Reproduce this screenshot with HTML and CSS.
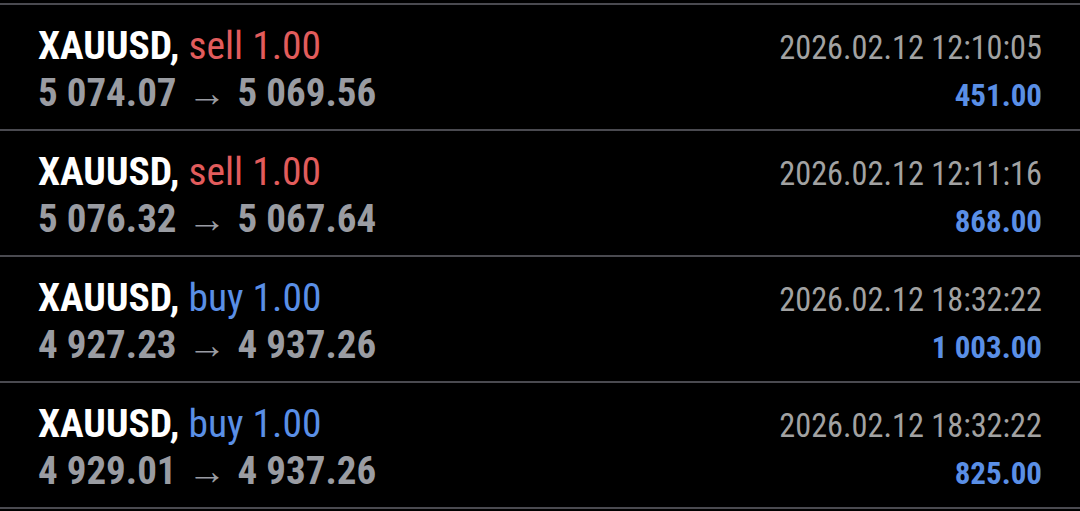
FILE: index.html
```html
<!DOCTYPE html>
<html lang="en">
<head>
  <meta charset="UTF-8" />
  <title>History</title>
  <link rel="stylesheet" href="styles.css">
</head>
<body>
<div class="deals">
  <div class="deal">
    <div class="title"><b>XAUUSD,</b> <span class="sell">sell 1.00</span></div>
    <div class="time">2026.02.12 12:10:05</div>
    <div class="prices">5 074.07 <span class="arrow">→</span> 5 069.56</div>
    <div class="profit">451.00</div>
  </div>
  <div class="deal">
    <div class="title"><b>XAUUSD,</b> <span class="sell">sell 1.00</span></div>
    <div class="time">2026.02.12 12:11:16</div>
    <div class="prices">5 076.32 <span class="arrow">→</span> 5 067.64</div>
    <div class="profit">868.00</div>
  </div>
  <div class="deal">
    <div class="title"><b>XAUUSD,</b> <span class="buy">buy 1.00</span></div>
    <div class="time">2026.02.12 18:32:22</div>
    <div class="prices">4 927.23 <span class="arrow">→</span> 4 937.26</div>
    <div class="profit">1 003.00</div>
  </div>
  <div class="deal">
    <div class="title"><b>XAUUSD,</b> <span class="buy">buy 1.00</span></div>
    <div class="time">2026.02.12 18:32:22</div>
    <div class="prices">4 929.01 <span class="arrow">→</span> 4 937.26</div>
    <div class="profit">825.00</div>
  </div>
</div>
</body>
</html>
```

FILE: styles.css
```css
body { margin: 0; background: #000; font-family: Roboto, "Liberation Sans", sans-serif; font-stretch: condensed; }
.deals { padding-top: 3px; }
.deal { display: grid; grid-template-columns: 1fr auto; align-items: baseline; row-gap: 3px; border-top: 2px solid #4a4a50; padding: 20px 38px 12px; line-height: 42px; }
.deal:last-child { border-bottom: 2px solid #4a4a50; }
.title { color: #fff; font-size: 39.5px; }
.title b { font-weight: 700; }
.sell { color: #e25c5c; }
.buy { color: #5a8fe6; }
.prices { color: #9a9ca2; font-size: 39px; font-weight: 700; }
.arrow { font-weight: 400; margin: 0 2px; }
.time { color: #a2a2a2; font-size: 32.3px; text-align: right; }
.profit { color: #5a8fe6; font-size: 31px; font-weight: 700; text-align: right; }
```
